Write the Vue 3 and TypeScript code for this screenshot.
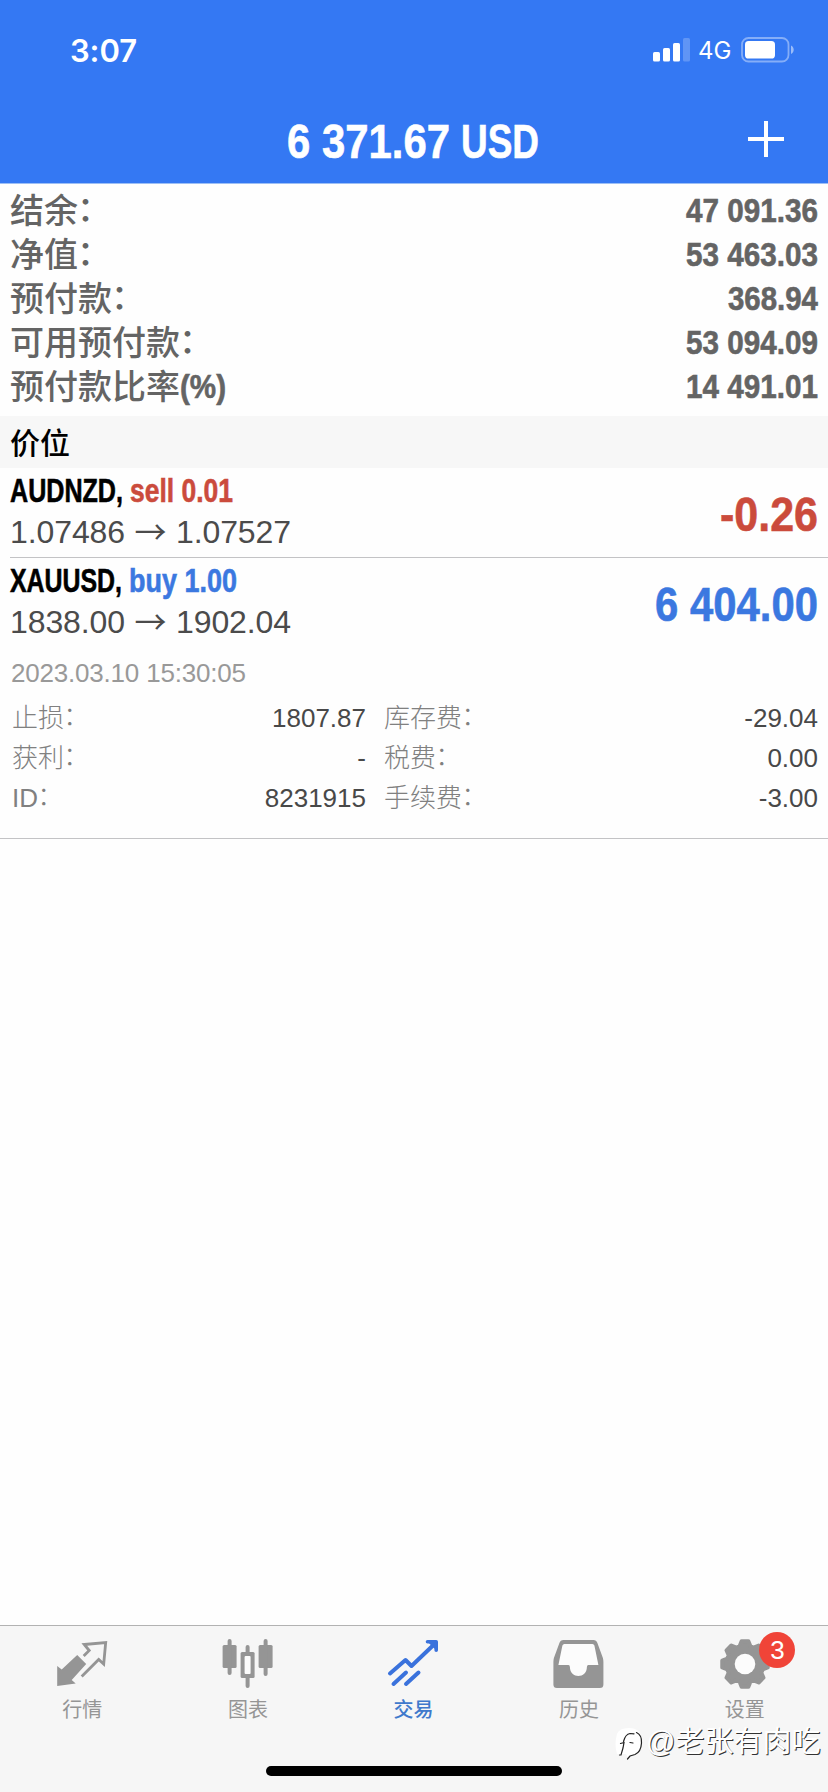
<script setup lang="ts">
import { h } from 'vue'

interface Label { text: string; width: number }
interface Detail { label: string; value: string }

// Advance widths of the bold face, in em; every other character used is 0.556.
const advances: Record<string, number> = {
  ' ': 0.278, '.': 0.278, ',': 0.278, l: 0.278, '-': 0.333, '(': 0.333, ')': 0.333,
  '%': 0.889, A: 0.722, U: 0.722, D: 0.722, N: 0.722, Z: 0.611, X: 0.667, S: 0.667,
  b: 0.611, u: 0.611,
}

// Condensed bold lettering: the natural line is squeezed to the given width.
const Narrow = (props: { text: string; width: number; size: number }) => {
  const natural = [...props.text].reduce((sum, c) => sum + (advances[c] ?? 0.556), 0) * props.size
  const height = Math.ceil(props.size * 1.14)
  return h('svg', {
    width: props.width,
    height,
    viewBox: `0 0 ${natural.toFixed(2)} ${height}`,
    preserveAspectRatio: 'none',
    class: 'narrow-svg',
  }, [
    h('text', { x: 0, y: props.size * 0.92, 'font-size': props.size }, props.text),
  ])
}
Narrow.props = ['text', 'width', 'size']

const balances: { label: string; unit?: string; value: Label }[] = [
  { label: '结余', value: { text: '47 091.36', width: 132 } },
  { label: '净值', value: { text: '53 463.03', width: 132 } },
  { label: '预付款', value: { text: '368.94', width: 90 } },
  { label: '可用预付款', value: { text: '53 094.09', width: 132 } },
  { label: '预付款比率', unit: '(%)', value: { text: '14 491.01', width: 132 } },
]

const positions: {
  symbol: Label; side: Label; kind: string; from: string; to: string; profit: Label
}[] = [
  { symbol: { text: 'AUDNZD,', width: 113 }, side: { text: 'sell 0.01', width: 103 }, kind: 'sell', from: '1.07486', to: '1.07527', profit: { text: '-0.26', width: 98 } },
  { symbol: { text: 'XAUUSD,', width: 112 }, side: { text: 'buy 1.00', width: 108 }, kind: 'buy', from: '1838.00', to: '1902.04', profit: { text: '6 404.00', width: 163 } },
]

const left: Detail[] = [
  { label: '止损', value: '1807.87' },
  { label: '获利', value: '-' },
  { label: 'ID', value: '8231915' },
]
const right: Detail[] = [
  { label: '库存费', value: '-29.04' },
  { label: '税费', value: '0.00' },
  { label: '手续费', value: '-3.00' },
]

const gearPoints = Array.from({ length: 8 }, (_, i) =>
  [[-17, 18.5], [-8.5, 23], [8.5, 23], [17, 18.5]].map(([deg, r]) => {
    const a = ((i * 45 + deg) * Math.PI) / 180
    return `${(30 + r * Math.sin(a)).toFixed(2)},${(30 - r * Math.cos(a)).toFixed(2)}`
  }).join(' '),
).join(' ')
</script>

<template>
  <div class="screen">
    <header class="header">
      <div class="status">
        <span class="time">3:07</span>
        <div class="indicators">
          <svg class="signal" width="38" height="24" viewBox="0 0 38 24" fill="#fff">
            <rect x="0" y="14" width="7" height="9.5" rx="1.6" />
            <rect x="10" y="10" width="7" height="13.5" rx="1.6" />
            <rect x="20" y="5" width="7" height="18.5" rx="1.6" />
            <rect x="30" y="0" width="7" height="23.5" rx="1.6" opacity=".22" />
          </svg>
          <span class="network">4G</span>
          <svg class="battery" width="54" height="26" viewBox="0 0 54 26">
            <rect x="1" y="1" width="46.5" height="23.5" rx="6.5" fill="none" stroke="#fff" stroke-opacity=".4" stroke-width="1.8" />
            <rect x="4" y="4" width="30" height="17.5" rx="3.6" fill="#fff" />
            <path d="M50 8.5c3.6 1.5 3.6 7 0 8.5z" fill="#fff" fill-opacity=".5" />
          </svg>
        </div>
      </div>
      <div class="titlebar">
        <h1 class="title">
          <Narrow text="6 371.67" :width="163" :size="48" />
          <Narrow text="USD" :width="78" :size="48" />
        </h1>
        <svg class="plus" width="36" height="36" viewBox="0 0 36 36" stroke="#fff" stroke-width="4">
          <path d="M0 18H36M18 0V36" />
        </svg>
      </div>
    </header>

    <section class="balances">
      <div v-for="b in balances" :key="b.label" class="balance">
        <div class="name">
          <span>{{ b.label }}</span>
          <Narrow v-if="b.unit" class="unit" :text="b.unit" :width="46" :size="33" />
          <span v-else class="colon">：</span>
        </div>
        <Narrow class="amount" :text="b.value.text" :width="b.value.width" :size="34" />
      </div>
    </section>

    <h2 class="heading">价位</h2>

    <section class="positions">
      <article v-for="p in positions" :key="p.symbol.text" class="position">
        <div class="summary">
          <div class="deal">
            <Narrow :text="p.symbol.text" :width="p.symbol.width" :size="33.5" />
            <Narrow :class="p.kind" :text="p.side.text" :width="p.side.width" :size="33.5" />
          </div>
          <div class="prices">
            <span>{{ p.from }}</span><span class="arrow">→</span><span>{{ p.to }}</span>
          </div>
        </div>
        <Narrow :class="['profit', p.kind]" :text="p.profit.text" :width="p.profit.width" :size="48" />
      </article>
      <div class="opened">2023.03.10 15:30:05</div>
      <div class="details">
        <dl v-for="(col, i) in [left, right]" :key="i" class="column">
          <div v-for="d in col" :key="d.label" class="detail">
            <dt>{{ d.label }}<span class="colon">：</span></dt><dd>{{ d.value }}</dd>
          </div>
        </dl>
      </div>
    </section>

    <div class="blank"></div>

    <footer class="footer">
      <nav class="tabs">
        <a class="tab">
          <svg width="60" height="60" viewBox="52.8 1634 60 60">
            <path d="M77 1655L61.5 1669.5L57 1666V1686L75.5 1683.5L71.5 1680L86 1664Z" fill="#959595" />
            <path d="M83.5 1656L89 1650.5L84 1644.5L105.5 1642.5L103.5 1664L98.5 1659.5L81.5 1676.5" fill="none" stroke="#959595" stroke-width="2.8" />
          </svg>
          <span>行情</span>
        </a>
        <a class="tab">
          <svg width="60" height="60" viewBox="218.4 1634 60 60">
            <g fill="#959595">
              <rect x="223" y="1645" width="14" height="23" rx="1.5" />
              <rect x="259" y="1645" width="14" height="23" rx="1.5" />
              <rect x="241" y="1652" width="14" height="26" rx="1.5" />
            </g>
            <path d="M230 1641V1673M266 1641V1674M248 1647V1686" stroke="#959595" stroke-width="4" stroke-linecap="round" />
            <rect x="245" y="1656" width="6" height="18" rx="1" fill="#fcfcfc" />
          </svg>
          <span>图表</span>
        </a>
        <a class="tab active">
          <svg width="60" height="60" viewBox="384 1634 60 60" fill="none" stroke="#3a72dc" stroke-width="4" stroke-linecap="round" stroke-linejoin="round">
            <path d="M390 1673.5L405.5 1660L411.5 1666L434 1644.5M393.5 1684L406 1672.5M406 1684L418.5 1672.5" />
            <path d="M427.5 1641.8H436.2V1650.2" stroke-width="3.6" fill="#3a72dc" />
          </svg>
          <span>交易</span>
        </a>
        <a class="tab">
          <svg width="60" height="60" viewBox="549.6 1634 60 60">
            <path d="M563 1640H593Q596 1640 597 1643L602.5 1658Q603 1660 603 1662V1684.5Q603 1688 599.5 1688H556.5Q553 1688 553 1684.5V1662Q553 1660 553.5 1658L559 1643Q560 1640 563 1640Z" fill="#959595" />
            <path d="M564 1644H592Q593.5 1644 594 1645.5L598 1665H588Q586.5 1665 586.5 1667C586.5 1679 569.5 1679 569.5 1667Q569.5 1665 568 1665H558L562 1645.5Q562.5 1644 564 1644Z" fill="#fcfcfc" />
          </svg>
          <span>历史</span>
        </a>
        <a class="tab">
          <svg width="60" height="60" viewBox="0 0 60 60">
            <polygon :points="gearPoints" fill="#959595" stroke="#959595" stroke-width="4" stroke-linejoin="round" />
            <circle cx="30" cy="30" r="10.3" fill="#fcfcfc" />
          </svg>
          <b class="badge">3</b>
          <span>设置</span>
        </a>
      </nav>
      <div class="home"></div>
    </footer>

    <div class="watermark">
      <svg width="32" height="36" viewBox="0 0 32 36" fill="none" stroke-linecap="round">
        <path d="M4 10Q6 4 16 4Q28 4 28.5 16Q28.5 28 20 31L15 34L13 30L4 30Q1 20 4 10Z" fill="#fff" />
        <path d="M10.5 17.5Q12.5 10 17 9.5L21 9.8M7.5 19.5L11 18.5L10 24L8 31H6.5M17 18.5L20 19M23.5 8.5Q29 11 28.5 19Q28 28 22 30.5L17 32L14.5 35" stroke="#222" stroke-width="1.2" />
      </svg>
      <span>@老张有肉吃</span>
    </div>
  </div>
</template>

<style>
html, body { margin: 0; background: #fff; }
.narrow-svg { display: block; overflow: visible; flex: none; fill: currentColor; stroke: currentColor; stroke-width: .6px; font-family: "Liberation Sans", sans-serif; font-weight: 700; font-kerning: none; }
</style>

<style scoped>
.screen {
  position: relative;
  display: flex;
  flex-direction: column;
  width: 828px;
  height: 1792px;
  overflow: hidden;
  background: #fefefe;
  font-family: "Liberation Sans", "Noto Sans CJK SC", sans-serif;
}
.header { height: 184px; flex: none; background: #3478f3; color: #fff; border-bottom: 1px solid #9dbff5; box-sizing: border-box; }
.status { display: flex; justify-content: space-between; height: 100px; padding: 0 33px 0 70px; box-sizing: border-box; }
.time { margin-top: 31px; font: 600 31px/40px Inter, sans-serif; letter-spacing: -.1px; }
.indicators { display: flex; align-items: flex-start; }
.signal { margin-top: 38px; }
.network { margin-left: 7px; width: 43px; margin-top: 36px; font: 400 24px/30px Inter, sans-serif; }
.battery { margin-top: 37px; }
.titlebar { position: relative; display: flex; justify-content: center; padding-right: 2px; }
.title { display: flex; gap: 11px; margin: 14px 0 0; }
.plus { position: absolute; right: 44px; top: 21px; }

.balances { padding: 4px 10px 8px; }
.balance { display: flex; justify-content: space-between; height: 44px; color: #646464; font-size: 34px; line-height: 44px; font-weight: 500; white-space: nowrap; }
.name { display: flex; margin-top: 1px; }
.colon { position: relative; top: -.06em; left: -.03em; }
.unit { margin-top: 3px; }
.amount { margin-top: 3px; }
.heading { margin: 0; height: 52px; padding-left: 10px; background: #f7f7f7; font: 500 30px/50px "Noto Sans CJK SC", sans-serif; color: #000; }

.position { display: flex; justify-content: space-between; height: 89px; margin-left: 10px; padding-right: 10px; border-bottom: 1px solid #c3c3c5; }
.position:nth-child(2) { border-bottom: 0; }
.deal { display: flex; gap: 7px; height: 39px; padding-top: 3px; color: #000; }
.prices { display: flex; height: 36px; margin-top: 4px; font-size: 32px; line-height: 36px; color: #4b4b4b; letter-spacing: -.1px; }
.arrow { width: 51px; margin-top: -2px; text-align: center; font-family: "Noto Sans CJK SC", sans-serif; }
.deal .sell, .profit.sell { color: #cb4b3c; }
.deal .buy, .profit.buy { color: #3b78e0; }
.profit { margin-top: 19px; }
.opened { padding: 11px 0 0 11px; font-size: 26px; line-height: 30px; color: #999; letter-spacing: -.2px; }
.details { display: flex; padding: 10px 10px 20px 12px; gap: 18px; border-bottom: 1px solid #c3c3c5; }
.column { margin: 0; flex: none; width: 354px; }
.column + .column { width: 434px; }
.detail { display: flex; justify-content: space-between; height: 40px; line-height: 40px; font-size: 26px; }
dt { color: #808080; font-weight: 300; }
dd { margin: 0; color: #484848; }
.blank { flex: 1; }

.footer { flex: none; height: 167px; box-sizing: border-box; border-top: 1px solid #b2b2b2; background: #f6f6f6; }
.tabs { display: flex; height: 140px; }
.tab { position: relative; flex: 1; display: flex; flex-direction: column; align-items: center; padding-top: 8px; color: #959595; font: 400 20px/28px "Noto Sans CJK SC", sans-serif; }
.tab svg { flex: none; }
.tab span { margin-top: 1px; margin-right: 1px; }
.active { color: #4079cc; font-weight: 500; }
.badge { position: absolute; left: 97px; top: 6px; width: 36px; height: 36px; border-radius: 50%; background: #f04438; color: #fff; text-align: center; font: 400 26px/36px "Liberation Sans", sans-serif; }
.home { width: 296px; height: 10px; margin: 0 auto; border-radius: 5px; background: #000; }
.watermark { position: absolute; left: 613px; top: 1724px; display: flex; color: #fff; font: 400 29px/36px "Liberation Sans", "Noto Sans CJK SC", sans-serif; text-shadow: 1px 1px 0 #333; white-space: nowrap; }
.watermark span { margin-left: 1px; }
</style>
